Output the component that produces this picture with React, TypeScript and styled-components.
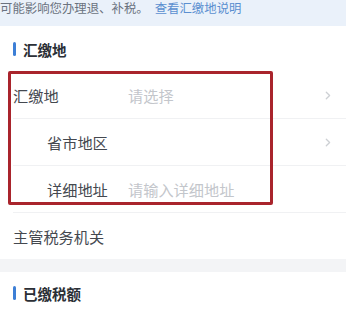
import React from "react";
import styled, { createGlobalStyle } from "styled-components";

const GlobalStyle = createGlobalStyle`
    html, body {
        margin: 0;
        padding: 0;
        background: #ffffff;
    }
    body {
        font-family: "Noto Sans CJK SC", "Noto Sans", sans-serif;
        overflow: hidden;
    }
`;

const Page = styled.div`
    position: relative;
    width: 346px;
    height: 313px;
    background: #ffffff;
`;

const Notice = styled.div`
    height: 26px;
    background: #eaf1fa;
    font-size: 12.4px;
    line-height: 17px;
    color: #6b7380;
    white-space: nowrap;
    overflow: hidden;
    .notice__link {
        margin-left: 6px;
        color: #5b8fd0;
    }
`;

const SectionHeader = styled.div<{ $height: number }>`
    display: flex;
    align-items: center;
    gap: 7px;
    height: ${(p) => p.$height}px;
    padding-left: 13px;
    font-size: 14.5px;
    font-weight: 700;
    color: #2b2f36;
    &::before {
        content: "";
        width: 3px;
        height: 14px;
        border-radius: 2px;
        background: #3d7fd6;
    }
`;

const Row = styled.div<{ $indent?: boolean }>`
    display: flex;
    align-items: center;
    height: 47px;
    margin-left: 13px;
    padding-left: ${(p) => (p.$indent ? 34 : 0)}px;
    box-sizing: border-box;
    border-bottom: 1px solid #f0f1f3;
    font-size: 15.2px;
    color: #44484f;
    .row__label {
        width: ${(p) => (p.$indent ? 81 : 115)}px;
        flex-shrink: 0;
    }
    .row__value {
        flex: 1;
        color: #c3c6cb;
    }
    .row__arrow {
        width: 18px;
        margin-right: 9px;
        color: #cdd0d4;
        display: flex;
        align-items: center;
        justify-content: center;
    }
`;

const LastRow = styled(Row)`
    border-bottom: none;
    height: 46px;
`;

const Gap = styled.div`
    height: 13px;
    background: #f3f4f6;
`;

const Highlight = styled.div`
    position: absolute;
    left: 8px;
    top: 71px;
    width: 265px;
    height: 134px;
    box-sizing: border-box;
    border: 3px solid #a9242c;
    border-radius: 2px;
    pointer-events: none;
`;

const Chevron: React.FC = () => (
    <svg width="6" height="9" viewBox="0 0 6 9" fill="none">
        <path d="M1.3 1.2 L4.6 4.5 L1.3 7.8" stroke="currentColor" strokeWidth="1.3" strokeLinecap="round" strokeLinejoin="round" />
    </svg>
);

const App: React.FC = () => {
    return (
        <>
            <GlobalStyle />
            <Page>
                <Notice>
                    可能影响您办理退、补税。
                    <span className="notice__link">查看汇缴地说明</span>
                </Notice>
                <SectionHeader $height={46}>汇缴地</SectionHeader>
                <Row>
                    <span className="row__label">汇缴地</span>
                    <span className="row__value">请选择</span>
                    <span className="row__arrow">
                        <Chevron />
                    </span>
                </Row>
                <Row $indent>
                    <span className="row__label">省市地区</span>
                    <span className="row__value"></span>
                    <span className="row__arrow">
                        <Chevron />
                    </span>
                </Row>
                <Row $indent>
                    <span className="row__label">详细地址</span>
                    <span className="row__value">请输入详细地址</span>
                </Row>
                <LastRow>
                    <span className="row__label">主管税务机关</span>
                </LastRow>
                <Gap />
                <SectionHeader $height={42}>已缴税额</SectionHeader>
                <Highlight />
            </Page>
        </>
    );
};

export default App;
